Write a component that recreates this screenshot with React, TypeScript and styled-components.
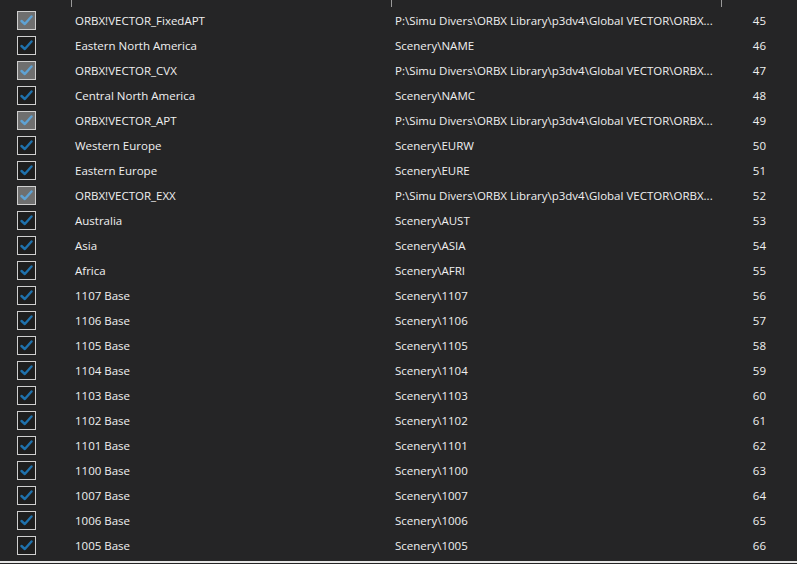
import React from "react";
import styled, { createGlobalStyle } from "styled-components";

const Global = createGlobalStyle`
  html, body { margin: 0; padding: 0; background: #252526; }
  body { font-family: "Open Sans", "Noto Sans", sans-serif; overflow: hidden; }
`;

const COLS = "72px 320px 330px 1fr";

const Table = styled.div`
  width: 797px;
  height: 564px;
  background: #252526;
  display: flex;
  flex-direction: column;
`;

const HeaderStub = styled.div`
  display: grid;
  grid-template-columns: ${COLS};
  height: 7px;
  flex: none;
`;

const HeaderCell = styled.div<{ $sep?: boolean }>`
  border-right: ${(p) => (p.$sep ? "1px solid #9a9a9a" : "none")};
`;

const Body = styled.div`
  display: flex;
  flex-direction: column;
  padding-top: 1px;
`;

const Row = styled.div`
  display: grid;
  grid-template-columns: ${COLS};
  height: 25px;
  align-items: center;
  color: #f0f0f0;
  font-size: 11.5px;
  white-space: nowrap;
`;

const CheckCell = styled.div`
  padding-left: 17px;
  display: flex;
  align-items: center;
`;

const Box = styled.div<{ $dim: boolean }>`
  width: 17px;
  height: 17px;
  border: 1px solid #cfcfcf;
  background: ${(p) => (p.$dim ? "#6f6f6f" : "#1e1e1e")};
  display: flex;
  align-items: center;
  justify-content: center;
`;

const TextCell = styled.div`
  padding-left: 3px;
  overflow: hidden;
`;

const NumCell = styled.div`
  text-align: right;
  padding-right: 31px;
`;

const BottomLine = styled.div`
  height: 2px;
  background: #e6e6e6;
  margin-top: 3px;
`;

const Check = ({ dim }: { dim: boolean }) => (
  <svg width="13" height="11" viewBox="0 0 13 11">
    <path
      d="M1.5 6 L4.8 9 L11.5 1.5"
      fill="none"
      stroke={dim ? "#5ea2d4" : "#1f72ad"}
      strokeWidth="2.4"
      strokeLinecap="round"
      strokeLinejoin="round"
    />
  </svg>
);

const P = "P:\\Simu Divers\\ORBX Library\\p3dv4\\Global VECTOR\\ORBX...";

const rows: [string, string, number, boolean][] = [
  ["ORBX!VECTOR_FixedAPT", P, 45, true],
  ["Eastern North America", "Scenery\\NAME", 46, false],
  ["ORBX!VECTOR_CVX", P, 47, true],
  ["Central North America", "Scenery\\NAMC", 48, false],
  ["ORBX!VECTOR_APT", P, 49, true],
  ["Western Europe", "Scenery\\EURW", 50, false],
  ["Eastern Europe", "Scenery\\EURE", 51, false],
  ["ORBX!VECTOR_EXX", P, 52, true],
  ["Australia", "Scenery\\AUST", 53, false],
  ["Asia", "Scenery\\ASIA", 54, false],
  ["Africa", "Scenery\\AFRI", 55, false],
  ["1107 Base", "Scenery\\1107", 56, false],
  ["1106 Base", "Scenery\\1106", 57, false],
  ["1105 Base", "Scenery\\1105", 58, false],
  ["1104 Base", "Scenery\\1104", 59, false],
  ["1103 Base", "Scenery\\1103", 60, false],
  ["1102 Base", "Scenery\\1102", 61, false],
  ["1101 Base", "Scenery\\1101", 62, false],
  ["1100 Base", "Scenery\\1100", 63, false],
  ["1007 Base", "Scenery\\1007", 64, false],
  ["1006 Base", "Scenery\\1006", 65, false],
  ["1005 Base", "Scenery\\1005", 66, false],
];

export default function App() {
  return (
    <Table>
      <Global />
      <HeaderStub>
        <HeaderCell $sep />
        <HeaderCell $sep />
        <HeaderCell $sep />
        <HeaderCell />
      </HeaderStub>
      <Body>
        {rows.map(([name, path, n, dim]) => (
          <Row key={n}>
            <CheckCell>
              <Box $dim={dim}>
                <Check dim={dim} />
              </Box>
            </CheckCell>
            <TextCell>{name}</TextCell>
            <TextCell>{path}</TextCell>
            <NumCell>{n}</NumCell>
          </Row>
        ))}
      </Body>
      <BottomLine />
    </Table>
  );
}
